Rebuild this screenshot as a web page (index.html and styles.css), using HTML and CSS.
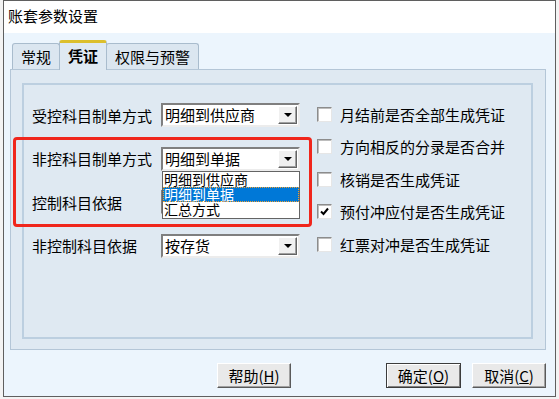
FILE: index.html
```html
<!DOCTYPE html>
<html lang="zh-CN">
<head>
  <meta charset="UTF-8" />
  <title>账套参数设置</title>
  <link rel="stylesheet" href="styles.css">
</head>
<body>
  <div class="ventana">
    <div class="titulo">账套参数设置</div>

    <div class="cliente">
      <div class="tabs">
        <div class="tab">常规</div>
        <div class="tab activa">凭证</div>
        <div class="tab">权限与预警</div>
      </div>

      <div class="panel">
        <div class="grupo">
          <div class="col-izq">
            <div class="fila">
              <span class="etiqueta">受控科目制单方式</span>
              <div class="combo">
                <span class="combo-valor">明细到供应商</span>
                <span class="combo-boton"><i class="flecha"></i></span>
              </div>
            </div>
            <div class="fila">
              <span class="etiqueta">非控科目制单方式</span>
              <div class="combo">
                <span class="combo-valor">明细到单据</span>
                <span class="combo-boton"><i class="flecha"></i></span>
                <ul class="combo-lista">
                  <li>明细到供应商</li>
                  <li class="sel">明细到单据</li>
                  <li>汇总方式</li>
                </ul>
              </div>
            </div>
            <div class="fila">
              <span class="etiqueta">控制科目依据</span>
              <!-- tapado por la lista desplegada -->
              <div class="combo"></div>
            </div>
            <div class="fila">
              <span class="etiqueta">非控制科目依据</span>
              <div class="combo">
                <span class="combo-valor">按存货</span>
                <span class="combo-boton"><i class="flecha"></i></span>
              </div>
            </div>
          </div>

          <div class="col-der">
            <label class="check"><span class="caja"></span>月结前是否全部生成凭证</label>
            <label class="check"><span class="caja"></span>方向相反的分录是否合并</label>
            <label class="check"><span class="caja"></span>核销是否生成凭证</label>
            <label class="check"><span class="caja"><svg width="11" height="11" viewBox="0 0 11 11"><path d="M2 5.5 L4.5 8 L9 2.5" fill="none" stroke="#000" stroke-width="2"/></svg></span>预付冲应付是否生成凭证</label>
            <label class="check"><span class="caja"></span>红票对冲是否生成凭证</label>
          </div>
        </div>
      </div>

      <div class="pie">
        <button class="boton ayuda">帮助(<u>H</u>)</button>
        <button class="boton defecto">确定(<u>O</u>)</button>
        <button class="boton">取消(<u>C</u>)</button>
      </div>
    </div>
  </div>

  <!-- marca roja de la captura -->
  <div class="marca"></div>
</body>
</html>
```

FILE: styles.css
```css
* {
  box-sizing: border-box;
  margin: 0;
  padding: 0;
}

body {
  font-family: "Noto Sans CJK SC", sans-serif;
  font-size: 15px;
  color: #000;
  background-color: #f3f3f3;
  padding-left: 3px;
}

.ventana {
  width: 553px;
  height: 397px;
  border: 1px solid #5f5f5f;
  background-color: #ecf5fd;
  display: flex;
  flex-direction: column;
}

.titulo {
  height: 32px;
  background-color: #fff;
  padding-left: 4px;
  line-height: 30px;
}

.cliente {
  flex: 1;
  padding: 7px 9px 0 6px;
  display: flex;
  flex-direction: column;
}

/* PESTAÑAS */
.tabs {
  display: flex;
  align-items: flex-end;
  height: 30px;
  padding-left: 2px;
  margin-bottom: -1px;
  position: relative;
  z-index: 1;
}

.tab {
  height: 26px;
  margin-bottom: 1px;
  padding: 0 8px;
  border: 1px solid #a9bccd;
  border-bottom: none;
  border-radius: 3px 3px 0 0;
  background-color: #dbe6f0;
  line-height: 25px;
}

.tab + .tab {
  margin-left: -1px;
}

.tab.activa {
  height: 30px;
  margin-bottom: 0;
  background-color: #dfe9f2;
  border-top: 3px solid #dcbf2c;
  font-weight: bold;
  line-height: 26px;
  position: relative;
  z-index: 2;
}

.panel {
  height: 281px;
  border: 1px solid #b4c6d7;
  background-color: #dfe9f2;
  padding: 13px 12px 10px 11px;
}

.grupo {
  height: 100%;
  border: 2px solid #bccfe0;
  display: flex;
  padding-left: 8px;
}

/* COLUMNA IZQUIERDA */
.col-izq {
  display: flex;
  flex-direction: column;
  gap: 19.5px;
  padding-top: 18px;
}

.fila {
  display: flex;
  align-items: center;
  height: 24px;
}

.etiqueta {
  width: 129px;
}

.combo {
  width: 139px;
  height: 24px;
  border: 2px solid;
  border-color: #7f7f7f #ececec #ececec #7f7f7f;
  background-color: #fff;
  display: flex;
  align-items: center;
  position: relative;
}

.combo-valor {
  flex: 1;
  padding-left: 2px;
  line-height: 20px;
}

.combo-boton {
  width: 19px;
  height: 18px;
  margin-right: 1px;
  background-color: #f0f0f0;
  border: 1px solid;
  border-color: #fff #646464 #646464 #fff;
  box-shadow: inset -1px -1px 0 #a0a0a0;
  display: flex;
  align-items: center;
  justify-content: center;
}

.flecha {
  width: 0;
  height: 0;
  border-left: 4px solid transparent;
  border-right: 4px solid transparent;
  border-top: 4px solid #000;
}

.combo-lista {
  position: absolute;
  top: calc(100% + 2px);
  left: -1px;
  width: 138px;
  height: 48px;
  list-style: none;
  background-color: #fff;
  border: 1px solid #646464;
  font-size: 14px;
  z-index: 3;
}

.combo-lista li {
  height: 15px;
  line-height: 15px;
  padding-left: 1px;
}

.combo-lista li.sel {
  background-color: #0078d7;
  color: #fff;
  outline: 1px dotted #f0a030;
  outline-offset: -1px;
}

/* COLUMNA DERECHA */
.col-der {
  display: flex;
  flex-direction: column;
  gap: 12.5px;
  padding-top: 19px;
  margin-left: 17px;
}

.check {
  display: flex;
  align-items: center;
  height: 20px;
}

.caja {
  width: 15px;
  height: 15px;
  margin-right: 8px;
  border: 1px solid;
  border-color: #8c8c8c #e6e6e6 #e6e6e6 #8c8c8c;
  box-shadow: inset 1px 1px 0 #bdbdbd;
  background-color: #fff;
  display: flex;
  align-items: center;
  justify-content: center;
}

/* BOTONES */
.pie {
  display: flex;
  align-items: flex-start;
  gap: 11px;
  padding: 13px 0 0 207px;
}

.boton {
  width: 74px;
  height: 25px;
  font-family: inherit;
  font-size: 15px;
  background-color: #e9e9e9;
  border: 1px solid;
  border-color: #fff #5a5a5a #5a5a5a #fff;
  box-shadow: inset -1px -1px 0 #a0a0a0;
}

.boton.ayuda {
  margin-right: 84px;
}

.boton.defecto {
  width: 75px;
  border-color: #3c3c3c;
  box-shadow: inset 1px 1px 0 #fff, inset -1px -1px 0 #808080;
}

.marca {
  position: absolute;
  left: 13px;
  top: 137px;
  width: 299px;
  height: 90px;
  border: 3px solid #f0261c;
  border-radius: 4px;
  z-index: 5;
}
```
